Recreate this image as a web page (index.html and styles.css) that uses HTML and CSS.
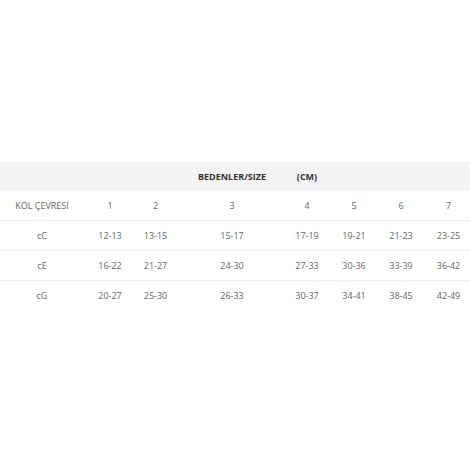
FILE: index.html
```html
<!DOCTYPE html>
<html lang="tr">
<head>
<meta charset="utf-8">
<link rel="stylesheet" href="styles.css">
</head>
<body>
<div class="page">
  <div class="table">
    <div class="row head">
      <span></span><span></span><span></span>
      <span class="strong">BEDENLER/SIZE</span>
      <span class="strong">(CM)</span>
      <span></span><span></span><span></span>
    </div>
    <div class="row">
      <span>KOL ÇEVRESİ</span><span>1</span><span>2</span><span>3</span><span>4</span><span>5</span><span>6</span><span>7</span>
    </div>
    <div class="row">
      <span>cC</span><span>12-13</span><span>13-15</span><span>15-17</span><span>17-19</span><span>19-21</span><span>21-23</span><span>23-25</span>
    </div>
    <div class="row">
      <span>cE</span><span>16-22</span><span>21-27</span><span>24-30</span><span>27-33</span><span>30-36</span><span>33-39</span><span>36-42</span>
    </div>
    <div class="row last">
      <span>cG</span><span>20-27</span><span>25-30</span><span>26-33</span><span>30-37</span><span>34-41</span><span>38-45</span><span>42-49</span>
    </div>
  </div>
</div>
</body>
</html>
```
FILE: styles.css
```css
html, body {
  margin: 0;
  padding: 0;
  background: #ffffff;
  overflow: hidden;
}
.page {
  width: 470px;
  height: 470px;
  padding-top: 162px;
  box-sizing: border-box;
  overflow: hidden;
  font-family: "Open Sans", "DejaVu Sans", sans-serif;
  font-size: 9px;
  color: #666;
}
.table {
  width: 470px;
}
.row {
  display: grid;
  grid-template-columns: 84px 52px 39px 114px 36px 58px 36px 59px;
  align-items: center;
  justify-items: center;
  height: 29px;
  border-bottom: 1px solid #ececec;
  white-space: nowrap;
}
.row.head {
  background: #f4f4f4;
  border-bottom: none;
}
.row.last {
  border-bottom: none;
}
.strong {
  font-weight: 700;
  color: #333;
}
```
